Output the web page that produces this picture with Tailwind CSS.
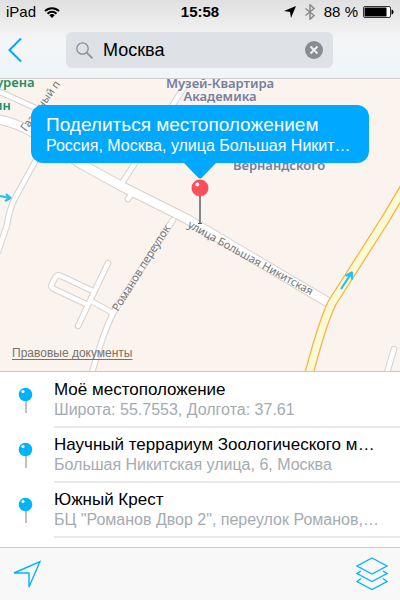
<!DOCTYPE html>
<html lang="ru">
<head>
  <meta charset="utf-8">
  <meta name="viewport" content="width=device-width, initial-scale=1">
  <title>Местоположение</title>
  <script src="https://cdn.jsdelivr.net/npm/@tailwindcss/browser@4"></script>
</head>
<body class="flex min-h-screen flex-col bg-white font-['Liberation_Sans',Arial,sans-serif] text-black">

  <header class="border-b border-[#cfcccb] bg-linear-to-b from-[#e0e0e0] via-[#f5f5f6] to-[#eff6f8] pb-2.5">
    <!-- status bar -->
    <div class="grid h-6 grid-cols-3 items-center pr-1.5 pl-1.5 text-[15px] leading-5">
      <div class="flex items-center gap-2">
        <span>iPad</span>
        <svg class="h-3 w-4" viewBox="0 0 16 12" fill="none" stroke="#000" stroke-width="2">
          <path d="M1 5a10 10 0 0 1 14 0M3.500 7.700a6.400 6.400 0 0 1 9 0"/>
          <path d="M8 12 5.300 9.300a3.800 3.800 0 0 1 5.400 0z" fill="#000" stroke="none"/>
        </svg>
      </div>
      <div class="text-center font-bold">15:58</div>
      <div class="flex items-center justify-end gap-1">
        <svg class="mr-1 h-3 w-3 shrink-0" viewBox="0 0 12 12"><path d="M12 0 7 12 6 6 0 5z"/></svg>
        <svg class="mr-1 h-4 w-3 shrink-0" viewBox="0 0 12 16" fill="none" stroke="#8e8e90" stroke-width="1.600"><path d="m1.500 4.500 8.500 7-4 3.800V.7l4 3.800-8.500 7"/></svg>
        <span class="shrink-0 whitespace-nowrap">88 %</span>
        <svg class="h-3 w-8 shrink-0" viewBox="0 0 32 12"><rect x="1.500" y=".5" width="27" height="11" rx="1.500" fill="#fff" stroke="#333"/><rect x="2.500" y="1.500" width="22" height="9"/><path d="M29.500 3.500c2.800.5 2.800 4.500 0 5z"/></svg>
      </div>
    </div>
    <!-- search -->
    <div class="flex items-center pt-2 pr-[67px] pl-2">
      <button type="button" aria-label="Назад" class="mr-11 shrink-0">
        <svg class="h-[26px] w-3.5" viewBox="0 0 14 26" fill="none" stroke="#00a9f9" stroke-width="2"><path d="M13 1.500 1.500 13 13 24.500"/></svg>
      </button>
      <div class="flex h-9 min-w-0 flex-1 items-center rounded-md bg-[#dee1e5] pr-2.5 pl-2.5">
        <svg class="h-[17px] w-[17px] shrink-0" viewBox="0 0 17 17" fill="none" stroke="#8e8e93" stroke-width="1.300"><circle cx="6.500" cy="6.500" r="5.700"/><path d="m10.700 10.700 5.700 5.700" stroke-width="1.700"/></svg>
        <input type="text" aria-label="Поиск" value="Москва" class="ml-2.5 min-w-0 flex-1 bg-transparent text-[18px] outline-none">
        <button type="button" aria-label="Очистить" class="shrink-0">
          <svg class="h-[18px] w-[18px]" viewBox="0 0 18 18"><circle cx="9" cy="9" r="9" fill="#8b8c91"/><path d="m5.500 5.500 7 7m0-7-7 7" stroke="#f0f1f3" stroke-width="2"/></svg>
        </button>
      </div>
    </div>
  </header>

  <main class="flex flex-1 flex-col">
    <section class="relative min-h-[280px] flex-1 overflow-hidden bg-[#fbf4ee]">
      <svg class="absolute inset-0 h-full w-full" viewBox="0 79 400 292" preserveAspectRatio="xMidYMid slice" fill="none" stroke-linejoin="round">
        <defs>
          <g id="streets">
            <path d="M-5 90 0 92 40 110"/>
            <path d="M36 160 15 198Q9 210 7 225L-2 252"/>
            <path d="M185 86 122 183"/>
            <path d="M173 220 113 313Q102 336 92 373"/>
            <path d="M113 313 91 301M108 263 78 326M88 305 54 289Q50 287 52 284L55 278Q57 274 61 276L93 291"/>
            <path d="M133 192 128 199M394 349 387 373"/>
          </g>
          <path id="main" d="M-4 119Q14 122 32 132L83 165 123 187 187 219 331 304"/>
          <path id="avenue" d="M404 188 385 220 332 303Q322 324 309 374"/>
        </defs>
        <g stroke-linecap="round">
          <use href="#streets" stroke="#d8d0cb" stroke-width="6.500"/>
          <use href="#main" stroke="#d8d0cb" stroke-width="10.500"/>
          <use href="#streets" stroke="#fff" stroke-width="4.500"/>
          <use href="#main" stroke="#fff" stroke-width="8.500"/>
        </g>
        <use href="#avenue" stroke="#f9b140" stroke-width="9.500"/>
        <use href="#avenue" stroke="#fbf9d6" stroke-width="7"/>
        <g stroke="#22bff2" stroke-width="2.200">
          <path d="M0 196 10 198M6 194 10.500 198 5 201"/>
          <path d="M341 289 351.500 273M345.500 276 351.800 272.500 352 279.500"/>
        </g>
        <g fill="#747476" font-family="'Noto Sans','Open Sans',sans-serif" font-size="11">
          <text transform="translate(26 132) rotate(-54)">Газетный п</text>
          <text transform="translate(118 312) rotate(-58)">Романов переулок</text>
          <text transform="translate(187 227) rotate(29)">улица Большая Никитская</text>
        </g>
        <g fill="#73809f" font-family="'Noto Sans',sans-serif" font-size="13" font-weight="600">
          <g text-anchor="middle">
            <text x="220" y="88">Музей-Квартира</text>
            <text x="220" y="101">Академика</text>
            <text x="220" y="115">Владимира</text>
            <text x="279" y="170">Вернандского</text>
          </g>
          <g fill="#159069">
            <text x="-4" y="87">урена</text>
            <text x="-6" y="110">ин</text>
          </g>
        </g>
      </svg>

      <!-- callout with pin -->
      <div class="absolute inset-x-[31px] top-[26px] flex flex-col items-center">
        <button type="button" class="w-full rounded-xl bg-[#00a9ff] px-[15px] pt-2 pb-2 text-left text-white">
          <span class="block truncate text-[19px] leading-6">Поделиться местоположением</span>
          <span class="block truncate text-[16px] leading-[18px]">Россия, Москва, улица Большая Никитская</span>
        </button>
        <svg class="h-4 w-8" viewBox="0 0 32 16" fill="#00a9ff"><path d="M0 0h32L18 14.500q-2 2-4 0z"/></svg>
        <svg class="h-[46px] w-[18px]" viewBox="0 0 18 46"><path d="M9 16v28" stroke="#858588" stroke-width="2"/><path d="M7 44.500h4" stroke="#555"/><circle cx="9" cy="9" r="8.500" fill="#ff4e5b"/><circle cx="6.300" cy="5.500" r="1.900" fill="#fff"/></svg>
      </div>
      <a href="#" class="absolute bottom-2.5 left-3 text-[12px] leading-4 text-[#77736f] underline underline-offset-2">Правовые документы</a>
    </section>

    <ul class="border-t border-[#cdc8c3] pt-px pb-[9px]">
      <li class="flex pl-[18px]">
        <svg class="mt-[14px] mr-5 h-7 w-4 shrink-0" viewBox="0 0 16 28"><path d="M8 12v14" stroke="#bcc0c8" stroke-width="2"/><circle cx="7.500" cy="7.500" r="6.800" fill="#00b4fb"/><circle cx="5" cy="4.500" r="1.600" fill="#fff"/></svg>
        <div class="min-w-0 flex-1 border-b-2 border-[#e9e9e9] pt-[7px] pr-5 pb-1.5">
          <p class="truncate text-[17px] leading-5">Моё местоположение</p>
          <p class="truncate text-[16px] leading-5 text-[#a4abb2]">Широта: 55.7553, Долгота: 37.61</p>
        </div>
      </li>
      <li class="flex pl-[18px]">
        <svg class="mt-[14px] mr-5 h-7 w-4 shrink-0" viewBox="0 0 16 28"><path d="M8 12v14" stroke="#bcc0c8" stroke-width="2"/><circle cx="7.500" cy="7.500" r="6.800" fill="#00b4fb"/><circle cx="5" cy="4.500" r="1.600" fill="#fff"/></svg>
        <div class="min-w-0 flex-1 border-b-2 border-[#e9e9e9] pt-[7px] pr-5 pb-1.5">
          <p class="truncate text-[17px] leading-5">Научный террариум Зоологического музея</p>
          <p class="truncate text-[16px] leading-5 text-[#a4abb2]">Большая Никитская улица, 6, Москва</p>
        </div>
      </li>
      <li class="flex pl-[18px]">
        <svg class="mt-[14px] mr-5 h-7 w-4 shrink-0" viewBox="0 0 16 28"><path d="M8 12v14" stroke="#bcc0c8" stroke-width="2"/><circle cx="7.500" cy="7.500" r="6.800" fill="#00b4fb"/><circle cx="5" cy="4.500" r="1.600" fill="#fff"/></svg>
        <div class="min-w-0 flex-1 border-b-2 border-[#e9e9e9] pt-[7px] pr-5 pb-1.5">
          <p class="truncate text-[17px] leading-5">Южный Крест</p>
          <p class="truncate text-[16px] leading-5 text-[#a4abb2]">БЦ "Романов Двор 2", переулок Романов, Москва</p>
        </div>
      </li>
    </ul>
  </main>

  <footer class="flex h-[53px] items-center justify-between border-t border-[#c8cccc] bg-[#f8f8f8] px-3">
    <button type="button" aria-label="Моё местоположение">
      <svg class="h-8 w-[30px]" viewBox="0 0 30 32" fill="none" stroke="#00b4f8" stroke-width="1.400"><path d="M28 3.500 17 29V15H2z"/></svg>
    </button>
    <button type="button" aria-label="Слои">
      <svg class="h-[34px] w-8" viewBox="0 0 32 34" fill="none" stroke="#00b4f8" stroke-width="1.300"><path d="M16 1 31 9 16 17 1 9zM5 14l-4 2.500L16 24.500l15-8L27 14M5 21.500 1 24.500 16 32.500l15-8-4-3"/></svg>
    </button>
  </footer>
</body>
</html>
